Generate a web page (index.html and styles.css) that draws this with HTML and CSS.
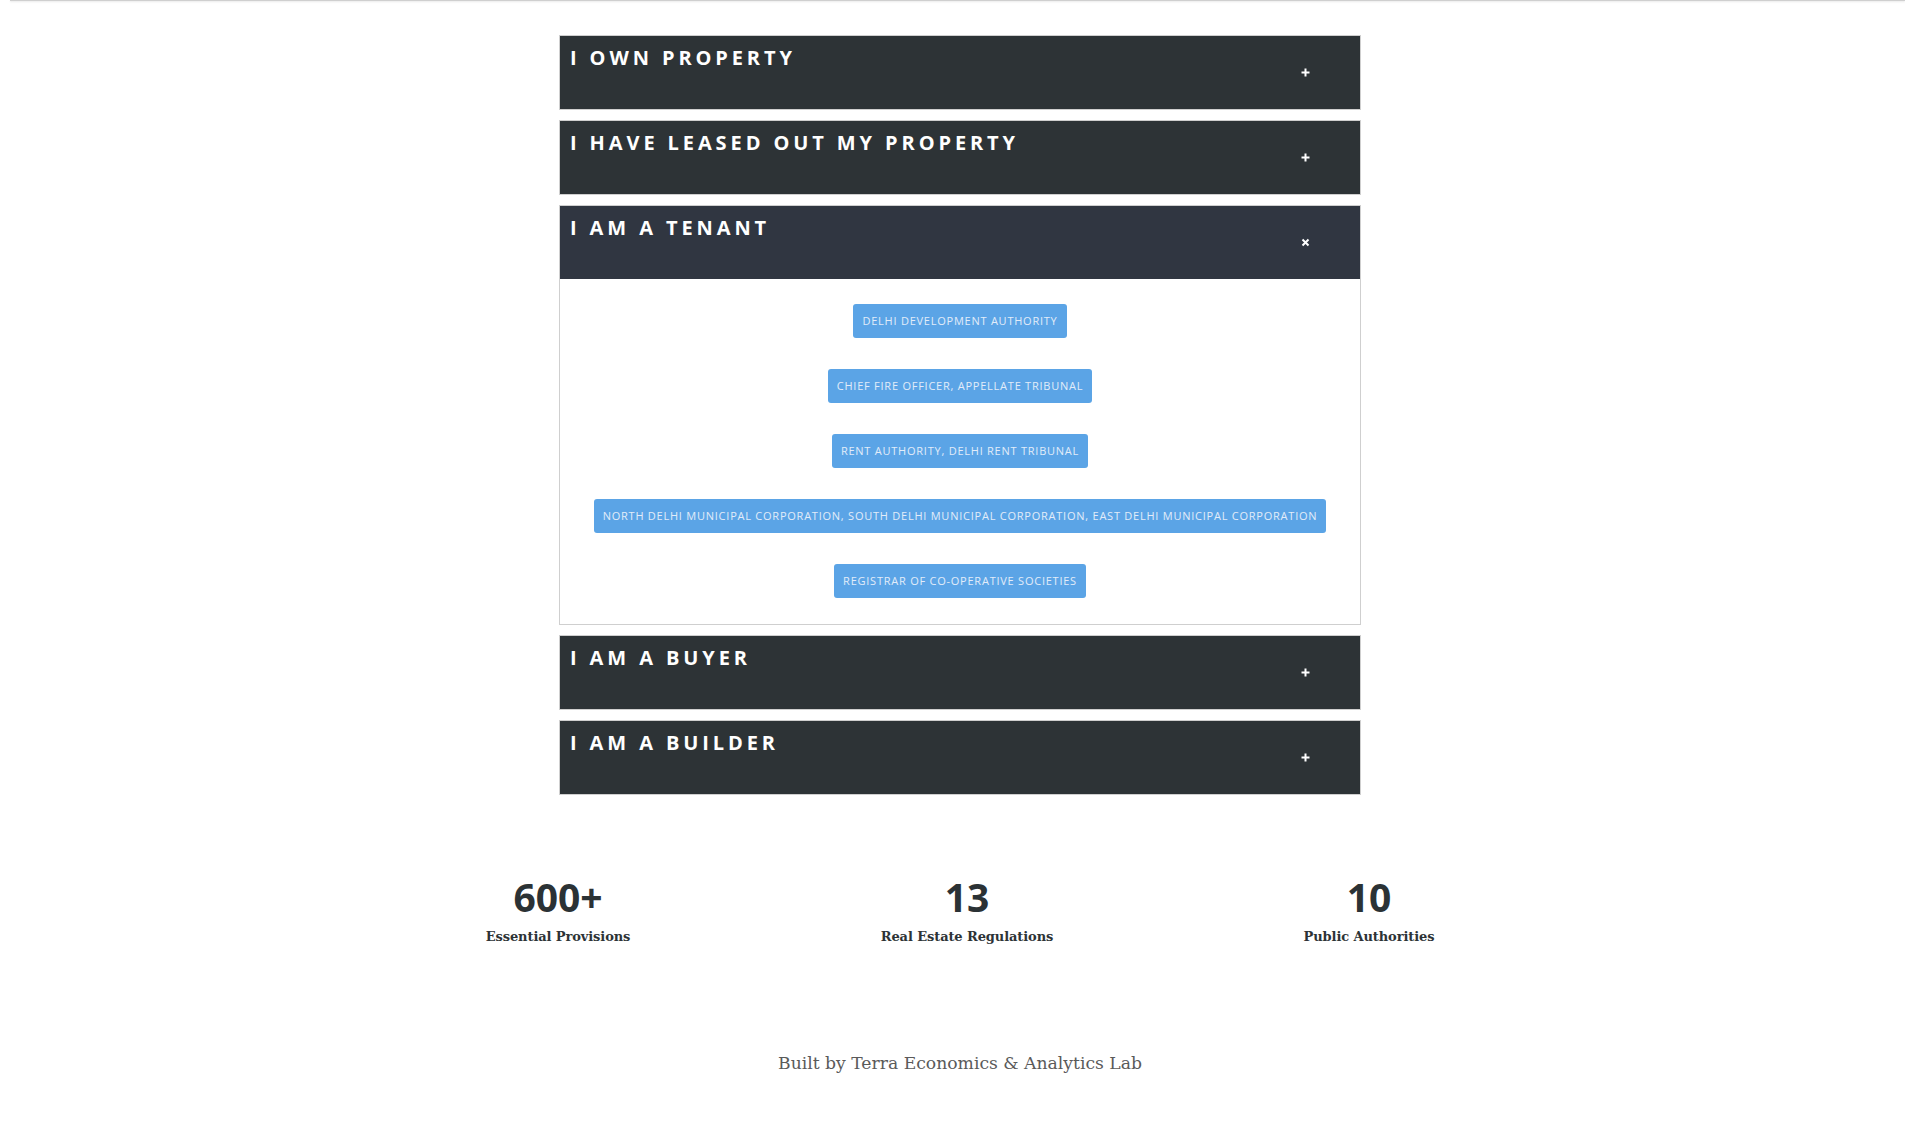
FILE: index.html
```html
<!DOCTYPE html>
<html lang="en">
<head>
<meta charset="utf-8">
<title>Delhi Property Laws</title>
<link rel="stylesheet" href="styles.css">
</head>
<body>
<div class="topbar"></div>
<main class="page">
  <section class="accordion">
    <div class="panel">
      <div class="panel-heading">
        <h4 class="panel-title">I OWN PROPERTY</h4>
        <span class="toggle"><svg viewBox="0 0 9 9" width="9" height="9"><path d="M4.5 0.5V8.5M0.5 4.5H8.5" stroke="#fff" stroke-width="2" fill="none"/></svg></span>
      </div>
    </div>
    <div class="panel">
      <div class="panel-heading">
        <h4 class="panel-title">I HAVE LEASED OUT MY PROPERTY</h4>
        <span class="toggle"><svg viewBox="0 0 9 9" width="9" height="9"><path d="M4.5 0.5V8.5M0.5 4.5H8.5" stroke="#fff" stroke-width="2" fill="none"/></svg></span>
      </div>
    </div>
    <div class="panel open">
      <div class="panel-heading">
        <h4 class="panel-title">I AM A TENANT</h4>
        <span class="toggle"><svg viewBox="0 0 9 9" width="9" height="9"><path d="M1.5 1.5L7.5 7.5M7.5 1.5L1.5 7.5" stroke="#fff" stroke-width="2" fill="none"/></svg></span>
      </div>
      <div class="panel-body">
        <a class="btn">DELHI DEVELOPMENT AUTHORITY</a>
        <a class="btn">CHIEF FIRE OFFICER, APPELLATE TRIBUNAL</a>
        <a class="btn">RENT AUTHORITY, DELHI RENT TRIBUNAL</a>
        <a class="btn">NORTH DELHI MUNICIPAL CORPORATION, SOUTH DELHI MUNICIPAL CORPORATION, EAST DELHI MUNICIPAL CORPORATION</a>
        <a class="btn">REGISTRAR OF CO-OPERATIVE SOCIETIES</a>
      </div>
    </div>
    <div class="panel">
      <div class="panel-heading">
        <h4 class="panel-title">I AM A BUYER</h4>
        <span class="toggle"><svg viewBox="0 0 9 9" width="9" height="9"><path d="M4.5 0.5V8.5M0.5 4.5H8.5" stroke="#fff" stroke-width="2" fill="none"/></svg></span>
      </div>
    </div>
    <div class="panel">
      <div class="panel-heading">
        <h4 class="panel-title">I AM A BUILDER</h4>
        <span class="toggle"><svg viewBox="0 0 9 9" width="9" height="9"><path d="M4.5 0.5V8.5M0.5 4.5H8.5" stroke="#fff" stroke-width="2" fill="none"/></svg></span>
      </div>
    </div>
  </section>

  <section class="stats">
    <div class="stat">
      <div class="stat-num">600+</div>
      <div class="stat-label">Essential Provisions</div>
    </div>
    <div class="stat">
      <div class="stat-num">13</div>
      <div class="stat-label">Real Estate Regulations</div>
    </div>
    <div class="stat">
      <div class="stat-num">10</div>
      <div class="stat-label">Public Authorities</div>
    </div>
  </section>

  <footer class="credit">Built by Terra Economics &amp; Analytics Lab</footer>
</main>
</body>
</html>
```

FILE: styles.css
```css
* { box-sizing: border-box; }

html, body {
  margin: 0;
  padding: 0;
  background: #fff;
}

body {
  font-family: "Open Sans", "Liberation Sans", sans-serif;
  color: #2d3336;
}

.topbar {
  height: 1px;
  margin-left: 10px;
  background: #cfcfcf;
  box-shadow: 0 1px 2px rgba(0, 0, 0, 0.12);
}

.page {
  padding-left: 15px;
}

.accordion {
  width: 802px;
  margin: 34px auto 0;
  display: flex;
  flex-direction: column;
  gap: 10px;
}

.panel {
  border: 1px solid #cfcfcf;
  background: #fff;
}

.panel-heading {
  height: 73px;
  background: #2d3336;
  padding: 8px 10px;
  display: flex;
  justify-content: space-between;
}

.panel.open .panel-heading {
  background: #303641;
}

.panel-title {
  margin: 0;
  align-self: flex-start;
  font-family: "Open Sans", sans-serif;
  font-weight: 700;
  font-size: 20px;
  line-height: 27px;
  letter-spacing: 3.9px;
  color: #fff;
}

.toggle {
  align-self: center;
  width: 9px;
  height: 9px;
  margin-right: 40px;
  display: flex;
}

.panel-body {
  padding: 25px 20px 26px;
  display: flex;
  flex-direction: column;
  align-items: center;
  gap: 31px;
}

.btn {
  display: block;
  height: 34px;
  padding: 9px 9px;
  background: #5ba4e6;
  border-radius: 3px;
  color: #e2ecf9;
  font-family: "Open Sans", sans-serif;
  font-size: 11px;
  line-height: 16px;
  letter-spacing: 0.76px;
  white-space: nowrap;
  cursor: pointer;
}

.stats {
  width: 1204px;
  margin: 82px auto 0;
  display: grid;
  grid-template-columns: 400px 418px 386px;
  text-align: center;
}

.stat-num {
  font-family: "Open Sans", sans-serif;
  font-weight: 700;
  font-size: 39px;
  line-height: 40px;
  color: #2b3235;
}

.stat-label {
  margin-top: 10px;
  font-family: "DejaVu Serif", "Liberation Serif", serif;
  font-weight: 700;
  font-size: 13px;
  line-height: 20px;
  letter-spacing: -0.1px;
  color: #2d3336;
}

.credit {
  margin-top: 104px;
  text-align: center;
  font-family: "DejaVu Serif", "Liberation Serif", serif;
  font-size: 17.2px;
  line-height: 24px;
  color: #5a5a5a;
}
```
